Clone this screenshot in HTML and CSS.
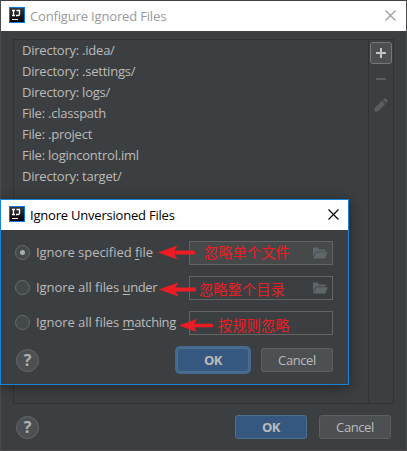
FILE: index.html
```html
<!DOCTYPE html>
<html lang="en">
<head>
<meta charset="utf-8">
<title>Configure Ignored Files</title>
<link rel="stylesheet" href="styles.css">
</head>
<body>
<svg class="defs" width="0" height="0">
  <defs>
    <linearGradient id="logoFill" x1="0" y1="0" x2="0" y2="1"><stop offset="0" stop-color="#3a3a3c"/><stop offset="1" stop-color="#000"/></linearGradient>
    <symbol id="logo" viewBox="0 0 16 16">
      <rect x=".5" y=".5" width="15" height="15" fill="url(#logoFill)" stroke="#0878ea"/>
      <path d="M3 3.500h3M4.500 3.500v5M3 8.500h3M7.500 3.500h3v3.700q0 1.300-1.300 1.300H7" fill="none" stroke="#fff" stroke-width="1.300"/>
      <path d="M3 12.500h6" stroke="#fff"/>
    </symbol>
    <symbol id="close" viewBox="0 0 11 11"><path d="M.5 .5l10 10M10.500 .5l-10 10" fill="none" stroke="currentColor" stroke-width="1.100"/></symbol>
    <symbol id="folder" viewBox="0 0 16 12"><path d="M1 .5h4.500l1.500 2h6.500v2H3.800L1 9.700z"/><path d="M4.300 5.300H15.800L13 11.500H1z"/></symbol>
    <symbol id="arrow" viewBox="0 0 38 15"><path d="M0 7.500L19.500 .5L16.500 5.500H35.500q1.500 0 1.500 1.300v1.400q0 1.300-1.500 1.300H16.500L19.500 14.500z"/></symbol>
  </defs>
</svg>
<div class="window">
  <header class="titlebar inactive">
    <svg class="logo"><use href="#logo"/></svg>
    <h1 class="title main-title">Configure Ignored Files</h1>
    <svg class="close"><use href="#close"/></svg>
  </header>
  <main class="panel">
    <ul class="list">
      <li>Directory: .idea/</li>
      <li>Directory: .settings/</li>
      <li>Directory: logs/</li>
      <li>File: .classpath</li>
      <li>File: .project</li>
      <li>File: logincontrol.iml</li>
      <li>Directory: target/</li>
    </ul>
    <div class="tools">
      <div class="tool active"><svg width="10" height="10"><path d="M4 0h2v4h4v2H6v4H4V6H0V4h4z"/></svg></div>
      <div class="tool"><svg width="10" height="2"><path d="M0 0h10v2H0z"/></svg></div>
      <div class="tool"><svg width="14" height="14"><path d="M.5 10.300L8 2.800l3.200 3.200L3.700 13.500H.5zM8.900 1.900L10.200 .6q.8-.8 1.600 0L13.400 2.200q.8.800 0 1.600L12.100 5.100z"/></svg></div>
    </div>
  </main>
  <footer class="actions">
    <div class="help">?</div>
    <div class="button primary">OK</div>
    <div class="button">Cancel</div>
  </footer>
</div>
<div class="dialog">
  <header class="titlebar">
    <svg class="logo"><use href="#logo"/></svg>
    <h2 class="title dialog-title">Ignore Unversioned Files</h2>
    <svg class="close"><use href="#close"/></svg>
  </header>
  <div class="form">
    <div class="row"><i class="radio checked"></i><label>Ignore specified <u>f</u>ile</label><div class="field disabled"><svg class="folder"><use href="#folder"/></svg></div></div>
    <div class="row"><i class="radio"></i><label>Ignore all files <span class="tight"><u>u</u>nder</span></label><div class="field"><svg class="folder"><use href="#folder"/></svg></div></div>
    <div class="row"><i class="radio"></i><label>Ignore all files <span class="tight"><u>m</u>atching</span></label><div class="field"></div></div>
  </div>
  <footer class="actions dialog-actions">
    <div class="help">?</div>
    <div class="button primary focused">OK</div>
    <div class="button">Cancel</div>
  </footer>
</div>
<div class="note n1"><svg class="arrow"><use href="#arrow"/></svg><span lang="zh">忽略单个文件</span></div>
<div class="note n2"><svg class="arrow"><use href="#arrow"/></svg><span lang="zh">忽略整个目录</span></div>
<div class="note n3"><svg class="arrow"><use href="#arrow"/></svg><span lang="zh">按规则忽略</span></div>
</body>
</html>
```
FILE: styles.css
```css
* { box-sizing: border-box; }
body { margin: 0; width: 407px; height: 451px; overflow: hidden; background: #3c3f41; color: #bbb; font: 13px/21px "Open Sans", "Noto Sans", sans-serif; }
.defs { position: absolute; }
svg { display: block; flex: none; }
.window { width: 407px; height: 451px; border: 1px solid #4b4b4d; border-top-color: #414144; display: flex; flex-direction: column; }
.titlebar { height: 30px; flex: none; background: #fff; color: #000; display: flex; align-items: center; padding: 0 10px 1px 8px; }
.titlebar.inactive { color: #999; }
.logo { width: 16px; height: 16px; margin-top: -1px; }
.dialog .titlebar { padding-right: 9px; }
.title { margin: 0 auto 0 5px; font-size: 13px; font-weight: 400; line-height: 20px; white-space: nowrap; letter-spacing: -.16px; }
.dialog-title { letter-spacing: -.21px; }
.close { width: 11px; height: 11px; }
.panel { height: 365px; margin: 8px 12px 0 12px; border: 1px solid #323232; display: flex; }
.list { flex: 1; margin: 0; padding: 0 0 0 8px; list-style: none; letter-spacing: -.23px; }
.list li { height: 21px; white-space: nowrap; }
.tools { width: 25px; border-left: 1px solid #323232; padding: 2px 1px; display: flex; flex-direction: column; gap: 4px; }
.tool { width: 22px; height: 22px; display: flex; align-items: center; justify-content: center; fill: #5b5d5f; }
.tool.active { fill: #c3c5c7; background: #4c5052; border: 1px solid #75797b; border-radius: 3px; }
.actions { display: flex; align-items: center; padding: 11px 15px 0 15px; }
.help { width: 23px; height: 23px; margin: 1px auto 0 0; border: 1px solid #646869; border-radius: 50%; background: #4c5052; font: 700 16px/21px "Open Sans", sans-serif; text-align: center; color: #afb1b3; }
.button { width: 72px; height: 24px; margin-left: 12px; border: 1px solid #5e6060; border-radius: 3px; background: #4c5052; text-align: center; line-height: 22px; letter-spacing: -.4px; }
.primary { background: #365880; border-color: #4c708c; font-weight: 700; }
.focused { box-shadow: 0 0 0 2px #43698e; }
.dialog { position: absolute; left: 0; top: 199px; width: 349px; height: 186px; border: 1px solid #1883d7; background: #3c3f41; box-shadow: 0 2px 12px rgba(0,0,0,.45); }
.form { padding: 11px 15px 0 14px; display: flex; flex-direction: column; gap: 11px; }
.row { height: 24px; display: flex; align-items: center; }
.radio { width: 15px; height: 15px; margin: -1px 6px 0 0; border: 1px solid #6b6b6b; border-radius: 50%; background: #43494a; display: flex; align-items: center; justify-content: center; }
.radio.checked::after { content: ""; width: 5px; height: 5px; border-radius: 50%; background: #adadad; }
.row label { white-space: nowrap; margin-top: -2px; letter-spacing: -.05px; }
.tight { letter-spacing: -.4px; }
.row u { text-decoration-thickness: 1px; text-underline-offset: 2px; text-decoration-skip-ink: none; }
.field { width: 144px; height: 24px; margin-left: auto; border: 1px solid #646464; background: #3c3f41; display: flex; align-items: center; justify-content: flex-end; padding-right: 4px; }
.field.disabled { background: #45494a; }
.folder { width: 16px; height: 12px; fill: #5f676b; }
.dialog-actions { padding: 13px 15px 0; }
.note { position: absolute; display: flex; align-items: center; height: 16px; color: #ed1c24; fill: #ed1c24; font: 14.3px/16px "Noto Sans CJK SC", sans-serif; white-space: nowrap; }
.arrow { width: 38px; height: 15px; }
.n1 { left: 158px; top: 244px; }
.n1 span { margin-left: 8px; }
.n2 { left: 159px; top: 281px; }
.n2 span { margin-left: 2px; }
.n3 { left: 179px; top: 317px; }
.n3 .arrow { width: 35px; }
.n3 span { margin-left: 4px; }
```
